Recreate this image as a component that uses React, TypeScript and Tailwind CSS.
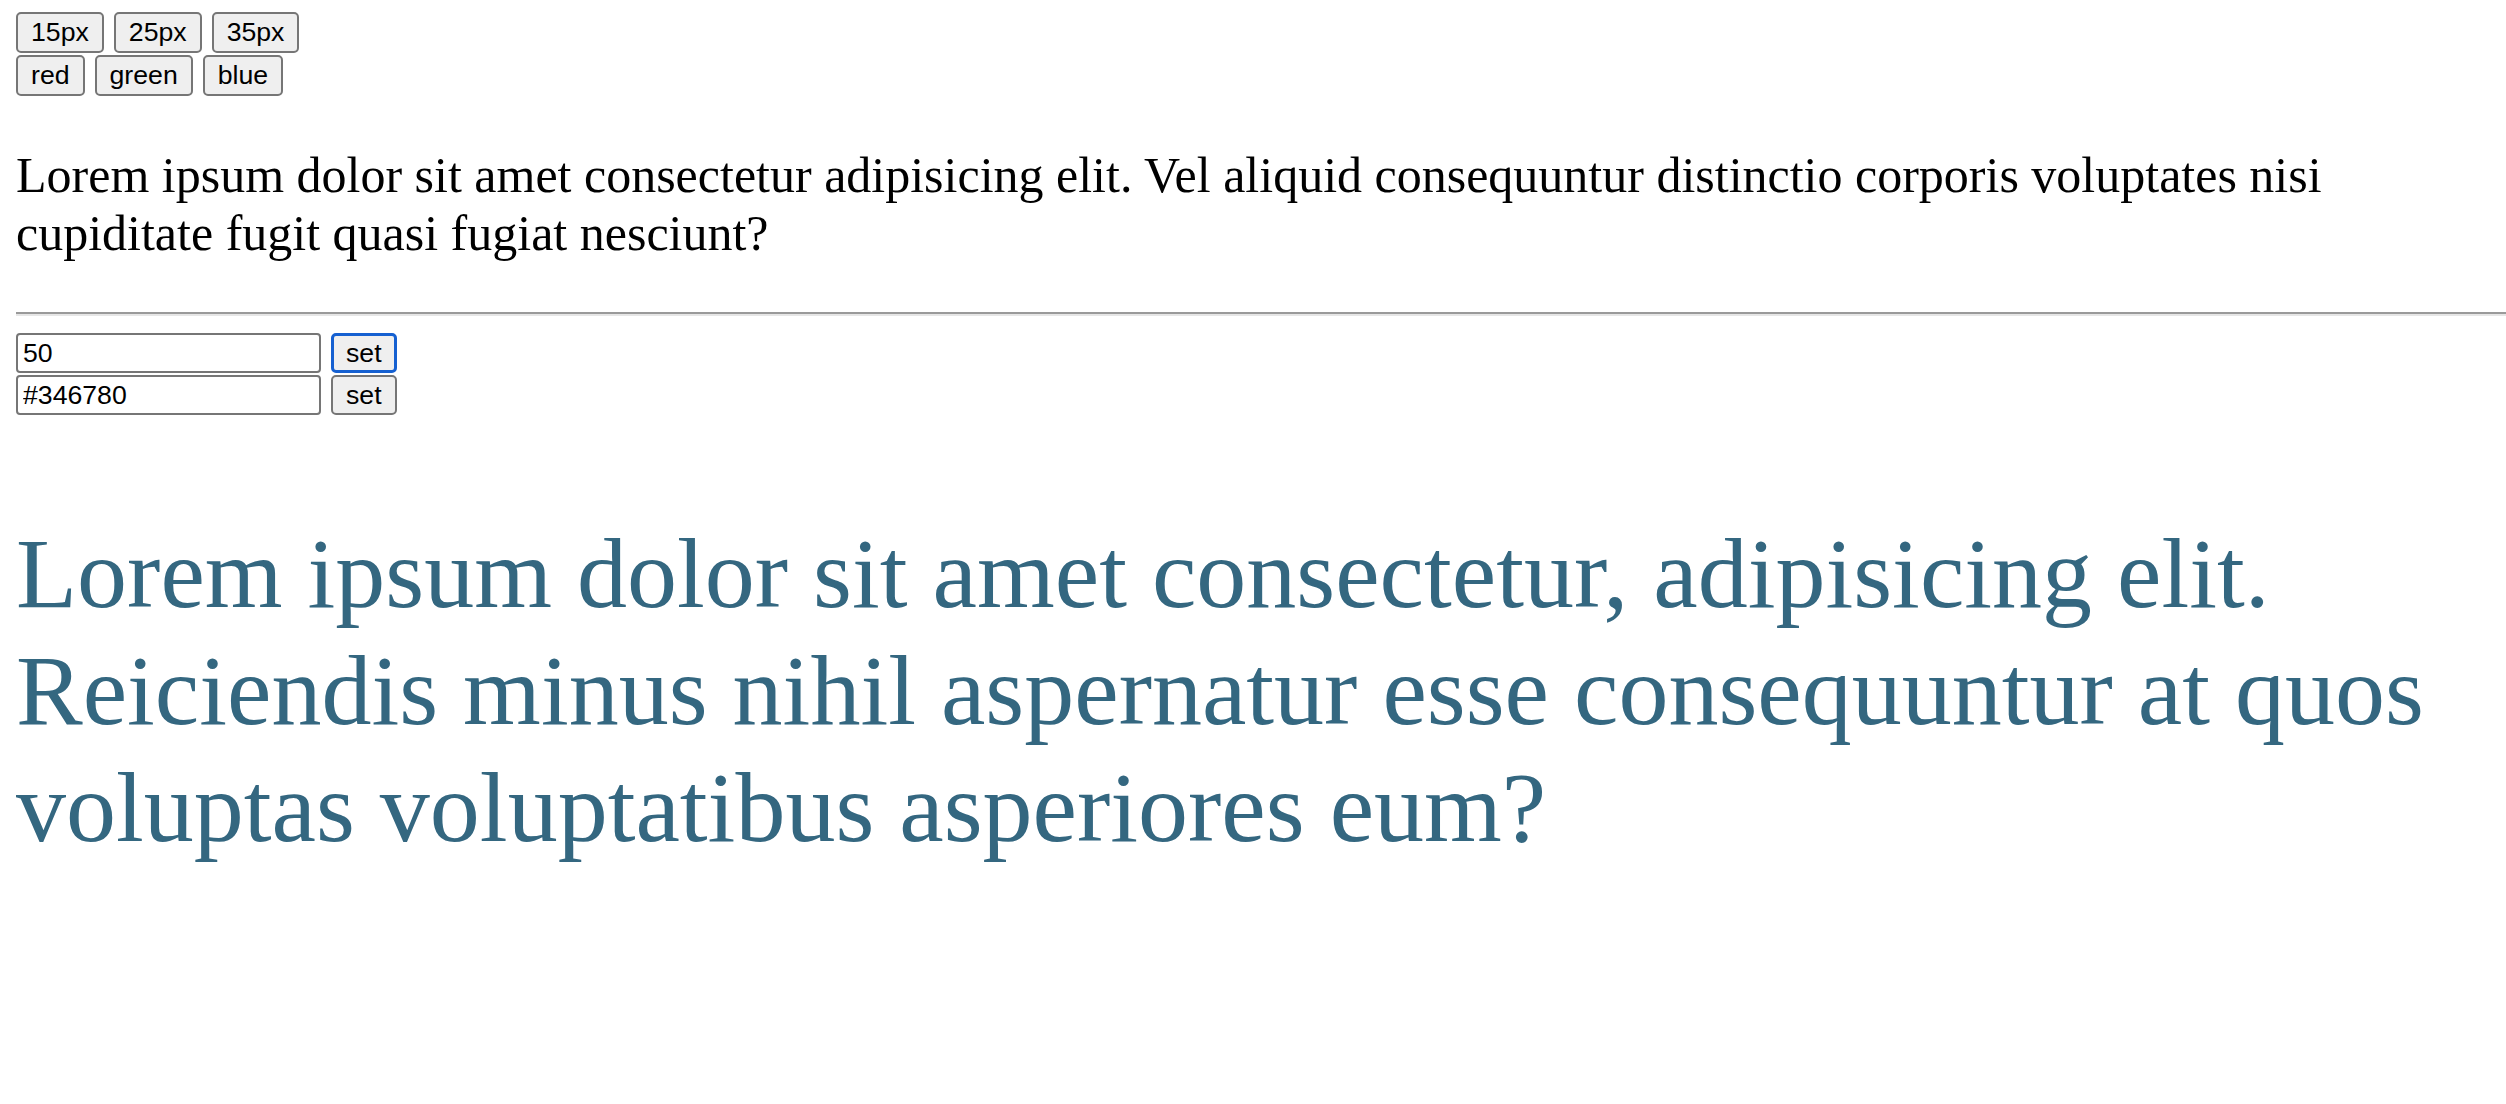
import React from "react";

const btn =
  "h-[41px] px-[13px] border-2 border-[#767676] rounded-[5px] bg-[#efefef] text-[26.67px] leading-none text-black [font-family:'Liberation_Sans',Arial,sans-serif]";

export default function App() {
  return (
    <div className="min-h-[1104px] bg-white pl-[16px] pt-[12px] [font-family:'Liberation_Serif','Times_New_Roman',serif] text-black">
      <div className="flex flex-col gap-[2px]">
        <div className="flex gap-[10px]">
          <button className={btn}>15px</button>
          <button className={btn}>25px</button>
          <button className={btn}>35px</button>
        </div>
        <div className="flex gap-[10px]">
          <button className={btn}>red</button>
          <button className={btn}>green</button>
          <button className={btn}>blue</button>
        </div>
      </div>

      <p className="mt-[50px] text-[50px] leading-[58px] pr-[16px]">
        Lorem ipsum dolor sit amet consectetur adipisicing elit. Vel aliquid consequuntur distinctio corporis voluptates nisi
        <br />
        cupiditate fugit quasi fugiat nesciunt?
      </p>

      <div className="mt-[50px] h-[4px] border-t-2 border-b-2 border-t-[#9a9a9a] border-b-[#e6e6e6]" />

      <div className="mt-[17px] flex flex-col gap-[2px] [font-family:'Liberation_Sans',Arial,sans-serif]">
        <div className="flex items-center gap-[10px]">
          <input
            readOnly
            value="50"
            className="w-[305px] h-[40px] px-[5px] border-2 border-[#767676] rounded-[4px] bg-white text-[26.67px] text-black outline-none"
          />
          <button className="h-[40px] px-[12px] border-[3px] border-[#1560d1] rounded-[5px] bg-[#efefef] text-[26.67px] leading-none text-black">
            set
          </button>
        </div>
        <div className="flex items-center gap-[10px]">
          <input
            readOnly
            value="#346780"
            className="w-[305px] h-[40px] px-[5px] border-2 border-[#767676] rounded-[4px] bg-white text-[26.67px] text-black outline-none"
          />
          <button className="h-[40px] px-[13px] border-2 border-[#767676] rounded-[5px] bg-[#efefef] text-[26.67px] leading-none text-black">
            set
          </button>
        </div>
      </div>

      <p className="mt-[100px] text-[100px] leading-[117px] text-[#346780] pr-[16px]">
        Lorem ipsum dolor sit amet consectetur, adipisicing elit.
        <br />
        Reiciendis minus nihil aspernatur esse consequuntur at quos
        <br />
        voluptas voluptatibus asperiores eum?
      </p>
    </div>
  );
}
